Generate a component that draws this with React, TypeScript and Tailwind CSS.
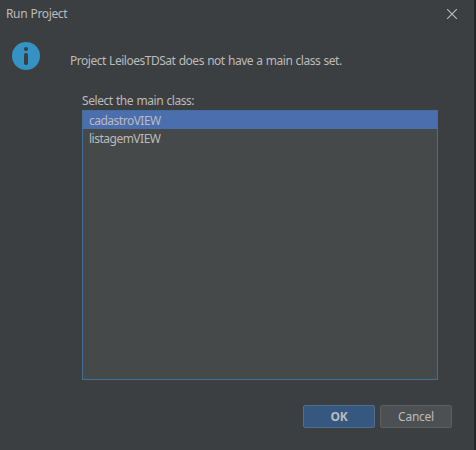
const classes = ["cadastroVIEW", "listagemVIEW"];

function InfoIcon() {
  return (
    <svg width="28" height="28" viewBox="0 0 28 28" className="block shrink-0">
      <circle cx="14" cy="14" r="14" fill="#3592c4" />
      <circle cx="14" cy="7" r="2.1" fill="#3c3f41" />
      <rect x="12" y="11" width="4" height="12" rx="1.7" fill="#3c3f41" />
    </svg>
  );
}

export default function App() {
  return (
    <div className="flex h-[450px] w-[476px] bg-[#28292a] font-['Noto_Sans','Open_Sans',sans-serif] text-[12px] leading-[18px] text-[#bbbbbb]">
      <div className="flex w-[474px] flex-col bg-[#3c3f41]">
        <header className="flex h-[28px] items-center justify-between pr-[17px] pl-[6px]">
          <span className="tracking-[-0.35px] [word-spacing:0.5px]">Run Project</span>
          <svg width="10" height="10" viewBox="0 0 10 10" stroke="#bbbbbb" strokeWidth="1.1">
            <path d="M0 0L10 10M10 0L0 10" />
          </svg>
        </header>

        <div className="flex pt-[14px] pl-3">
          <InfoIcon />
          <p className="mt-[10px] ml-[30px] tracking-[-0.48px] [word-spacing:0.6px] whitespace-nowrap">
            Project LeiloesTDSat does not have a main class set.
          </p>
        </div>

        <main className="mt-[22px] ml-[82px] w-[356px]">
          <div className="h-[18px] tracking-[-0.44px] [word-spacing:0.6px]">Select the main class:</div>
          <ul className="h-[270px] border border-[#466d94] bg-[#45494a]">
            {classes.map((name, i) => (
              <li
                key={name}
                className={
                  i === 0
                    ? "h-[18px] bg-[#4b6eaf] pl-[6px] leading-[20px] tracking-[-0.5px]"
                    : "h-[18px] pl-[6px] leading-[20px] tracking-[-0.5px]"
                }
              >
                {name}
              </li>
            ))}
          </ul>
        </main>

        <footer className="mt-[25px] flex justify-end gap-[5px] pr-[22px]">
          <button className="h-[23px] w-[72px] rounded-[2px] border border-[#4c708c] bg-[#365880] leading-[21px] font-bold tracking-[-0.2px]">
            OK
          </button>
          <button className="h-[23px] w-[72px] rounded-[2px] border border-[#5e6060] bg-[#4c5052] leading-[21px] tracking-[-0.25px]">
            Cancel
          </button>
        </footer>
      </div>
    </div>
  );
}
